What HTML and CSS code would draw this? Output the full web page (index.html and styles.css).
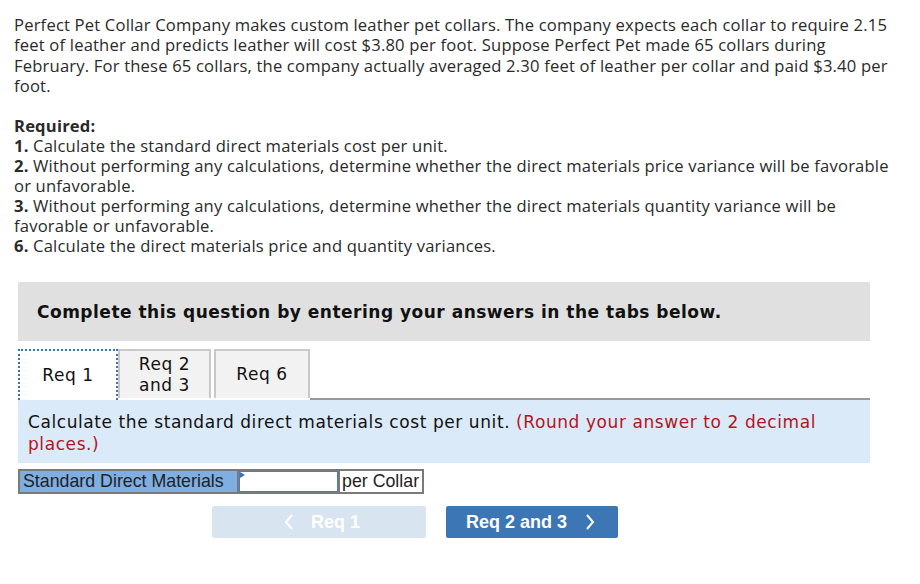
FILE: index.html
```html
<!DOCTYPE html>
<html>
<head>
<meta charset="utf-8">
<link rel="stylesheet" href="styles.css">
</head>
<body>
<div class="page">
  <p class="intro">Perfect Pet Collar Company makes custom leather pet collars. The company expects each collar to require 2.15 feet of leather and predicts leather will cost $3.80 per foot. Suppose Perfect Pet made 65 collars during February. For these 65 collars, the company actually averaged 2.30 feet of leather per collar and paid $3.40 per foot.</p>
  <div class="required">
    <div><b>Required:</b></div>
    <div><b>1.</b> Calculate the standard direct materials cost per unit.</div>
    <div><b>2.</b> Without performing any calculations, determine whether the direct materials price variance will be favorable or unfavorable.</div>
    <div><b>3.</b> Without performing any calculations, determine whether the direct materials quantity variance will be favorable or unfavorable.</div>
    <div><b>6.</b> Calculate the direct materials price and quantity variances.</div>
  </div>
  <div class="widget">
    <div class="banner">Complete this question by entering your answers in the tabs below.</div>
    <div class="tabs">
      <div class="tab active">Req 1</div>
      <div class="tab">Req 2<br>and 3</div>
      <div class="tab">Req 6</div>
      <div class="tabline"></div>
    </div>
    <div class="panel">Calculate the standard direct materials cost per unit. <span class="hint">(Round your answer to 2 decimal places.)</span></div>
    <div class="answer">
      <div class="label">Standard Direct Materials</div>
      <div class="inputcell"><span class="flag"></span></div>
      <div class="unit">per Collar</div>
    </div>
    <div class="nav">
      <div class="btn prev">
        <svg class="chev" width="10" height="16" viewBox="0 0 10 16"><polyline points="8,1 2,8 8,15" fill="none" stroke="#fff" stroke-width="2"/></svg>
        <span>Req 1</span>
      </div>
      <div class="btn next">
        <span>Req 2 and 3</span>
        <svg class="chev" width="10" height="16" viewBox="0 0 10 16"><polyline points="2,1 8,8 2,15" fill="none" stroke="#fff" stroke-width="2"/></svg>
      </div>
    </div>
  </div>
</div>
</body>
</html>
```
FILE: styles.css
```css
html, body { margin: 0; padding: 0; background: #fff; }
.page {
  padding: 15px 0 0 14px;
  font-family: "Open Sans", "Liberation Sans", sans-serif;
  color: #2a2a2a;
}
.intro {
  margin: 0;
  width: 876px;
  font-size: 16.6px;
  line-height: 20.3px;
  letter-spacing: 0.18px;
}
.required {
  margin-top: 20px;
  width: 876px;
  font-size: 16.6px;
  line-height: 20px;
  letter-spacing: 0.18px;
}
.required b { font-weight: 700; }
.widget {
  margin: 26px 0 0 4px;
  width: 852px;
  font-family: "DejaVu Sans", Verdana, sans-serif;
}
.banner {
  background: #e0e0e0;
  height: 59px;
  display: flex;
  align-items: center;
  padding-left: 19px;
  font-weight: bold;
  font-size: 17px;
  letter-spacing: 0.5px;
  color: #111;
}
.tabs {
  margin-top: 8px;
  display: flex;
  align-items: flex-end;
  height: 51px;
}
.tab {
  box-sizing: border-box;
  height: 49px;
  background: #f2f2f2;
  border: 2px solid #c8c8c8;
  border-bottom: none;
  display: flex;
  align-items: center;
  justify-content: center;
  text-align: center;
  font-size: 17px;
  letter-spacing: 0.55px;
  line-height: 21px;
  color: #111;
  margin-bottom: 2px;
}
.tab:nth-child(1) { width: 100px; }
.tab:nth-child(2) { width: 93px; }
.tab:nth-child(3) { width: 96px; margin-left: 3px; }
.tab.active {
  background: #fff;
  border: 2px dotted #3b73b9;
  border-bottom: none;
  height: 51px;
  margin-bottom: 0;
}
.tabline {
  flex: 1;
  height: 2px;
  background: #999;
}
.panel {
  background: #dbeaf8;
  padding: 11px 10px 0 10px;
  height: 52px;
  font-size: 17px;
  letter-spacing: 0.58px;
  line-height: 22px;
  color: #111;
}
.hint { color: #b5141e; }
.answer {
  margin-top: 6px;
  display: flex;
  width: 406px;
  height: 25px;
  border: 2px solid #7a7a7a;
  box-sizing: border-box;
  font-family: "Liberation Sans", Arial, sans-serif;
  font-size: 17.8px;
  color: #222;
}
.label {
  background: #7eaee2;
  width: 214px;
  padding-left: 3px;
  line-height: 21px;
  border-right: 2px solid #7a7a7a;
}
.inputcell {
  position: relative;
  width: 99px;
  background: #fff;
  border: 1px solid #4a80c0;
  box-sizing: border-box;
}
.flag {
  position: absolute;
  left: 0; top: 0;
  width: 0; height: 0;
  border-top: 3px solid transparent;
  border-bottom: 3px solid transparent;
  border-left: 5px solid #3b73b9;
}
.unit {
  border-left: 2px solid #7a7a7a;
  padding-left: 2px;
  line-height: 21px;
  flex: 1;
  background: #fff;
}
.nav {
  margin-top: 12px;
  display: flex;
  padding-left: 194px;
  gap: 20px;
}
.btn {
  height: 32px;
  border-radius: 2px;
  display: flex;
  align-items: center;
  font-family: "Liberation Sans", Arial, sans-serif;
  font-weight: bold;
  font-size: 18px;
  color: #fff;
  box-sizing: border-box;
}
.prev { width: 214px; background: #d8e4f0; justify-content: center; gap: 17px; padding-left: 6px; }
.next { width: 172px; background: #3c76b5; padding-left: 20px; gap: 18px; }
```
